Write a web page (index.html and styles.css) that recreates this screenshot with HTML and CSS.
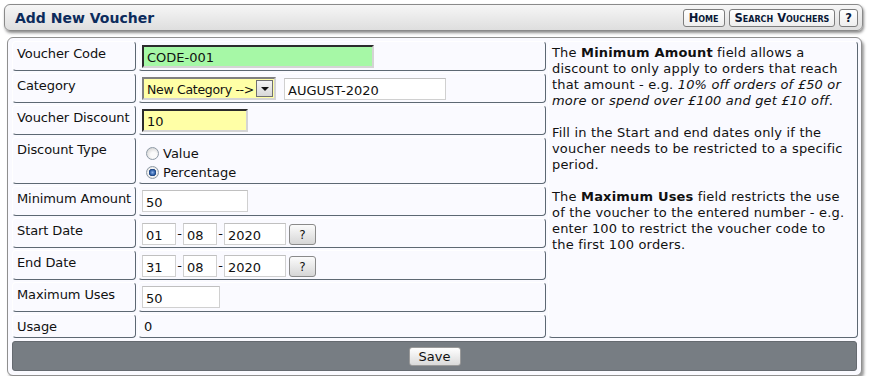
FILE: index.html
```html
<!DOCTYPE html>
<html lang="en">
<head>
  <meta charset="UTF-8">
  <meta name="viewport" content="width=device-width, initial-scale=1.0">
  <title>Add New Voucher</title>
  <link rel="stylesheet" href="styles.css">
</head>
<body>
  <div class="title-bar">
    <h1>Add New Voucher</h1>
    <div class="title-links">
      <a href="#" class="title-btn">Home</a>
      <a href="#" class="title-btn">Search Vouchers</a>
      <a href="#" class="title-btn">?</a>
    </div>
  </div>

  <div class="voucher-panel">
    <div class="form-grid">
      <div class="cell label">Voucher Code</div>
      <div class="cell field"><input type="text" class="inp inp-code" value="CODE-001"></div>

      <div class="cell help">
        <p>The <b>Minimum Amount</b> field allows a discount to only apply to orders that reach that amount - e.g. <i>10% off orders of £50 or more</i> or <i>spend over £100 and get £10 off</i>.</p>
        <p>Fill in the Start and end dates only if the voucher needs to be restricted to a specific period.</p>
        <p>The <b>Maximum Uses</b> field restricts the use of the voucher to the entered number - e.g. enter 100 to restrict the voucher code to the first 100 orders.</p>
      </div>

      <div class="cell label">Category</div>
      <div class="cell field">
        <div class="fake-select">
          <span class="fake-select-text">New Category --&gt;</span>
          <span class="fake-select-arrow"></span>
        </div>
        <input type="text" class="inp inp-plain inp-cat" value="AUGUST-2020">
      </div>

      <div class="cell label">Voucher Discount</div>
      <div class="cell field"><input type="text" class="inp inp-yellow inp-short" value="10"></div>

      <div class="cell label">Discount Type</div>
      <div class="cell field radios">
        <label class="radio"><input type="radio" name="dtype"> Value</label>
        <label class="radio"><input type="radio" name="dtype" checked> Percentage</label>
      </div>

      <div class="cell label">Minimum Amount</div>
      <div class="cell field"><input type="text" class="inp inp-plain inp-short" value="50"></div>

      <div class="cell label">Start Date</div>
      <div class="cell field date-row">
        <input type="text" class="inp inp-plain inp-day" value="01">
        <span class="dash">-</span>
        <input type="text" class="inp inp-plain inp-day" value="08">
        <span class="dash">-</span>
        <input type="text" class="inp inp-plain inp-year" value="2020">
        <button class="cal-btn">?</button>
      </div>

      <div class="cell label">End Date</div>
      <div class="cell field date-row">
        <input type="text" class="inp inp-plain inp-day" value="31">
        <span class="dash">-</span>
        <input type="text" class="inp inp-plain inp-day" value="08">
        <span class="dash">-</span>
        <input type="text" class="inp inp-plain inp-year" value="2020">
        <button class="cal-btn">?</button>
      </div>

      <div class="cell label">Maximum Uses</div>
      <div class="cell field"><input type="text" class="inp inp-plain inp-uses" value="50"></div>

      <div class="cell label">Usage</div>
      <div class="cell field usage">0</div>
    </div>

    <div class="save-bar">
      <button class="save-btn">Save</button>
    </div>
  </div>
</body>
</html>
```

FILE: styles.css
```css
* { box-sizing: border-box; }
body {
  margin: 0;
  padding: 4px 6px 0 4px;
  background: #fff;
  font-family: "DejaVu Sans", Verdana, sans-serif;
  font-size: 13px;
  color: #111;
}

/* title bar */
.title-bar {
  display: flex;
  align-items: center;
  justify-content: space-between;
  height: 27px;
  padding: 0 4px 0 10px;
  background: linear-gradient(#f6f6f6, #dedede);
  border: 1px solid #8a8a8a;
  border-radius: 6px;
  box-shadow: 1px 2px 3px rgba(0,0,0,0.45);
}
.title-bar h1 {
  margin: 0;
  font-size: 14px;
  font-weight: bold;
  color: #0c2b5c;
}
.title-links {
  display: flex;
  gap: 4px;
}
.title-btn {
  display: block;
  height: 18px;
  padding: 0 5px;
  line-height: 16px;
  font-size: 11.5px;
  font-weight: bold;
  font-variant: small-caps;
  color: #0a1836;
  text-decoration: none;
  background: linear-gradient(#fff, #eee);
  border: 1px solid #7d7d7d;
  border-radius: 3px;
}

/* main panel */
.voucher-panel {
  margin: 6px 0 0 3px;
  width: 855px;
  padding: 3px 4px 4px;
  background: #fafaff;
  border: 1px solid #8f8f8f;
  border-radius: 6px;
  box-shadow: 2px 3px 3px rgba(0,0,0,0.4);
}
.form-grid {
  display: grid;
  grid-template-columns: 124px 408px 310px;
  grid-template-rows: 30px 30px 30px 47px 30px 30px 30px 30px 24px;
  gap: 2px;
}
.cell {
  border: 1px solid;
  border-color: #fff #5d6873 #5d6873 #fff;
  border-radius: 4px;
}
.label {
  padding: 4px 0 0 4px;
  line-height: 16px;
  white-space: nowrap;
  letter-spacing: -0.1px;
}
.field {
  display: flex;
  align-items: flex-start;
  padding: 3px 3px 0 3px;
}
.help {
  grid-column: 3;
  grid-row: 1 / 10;
  padding: 3px 9px 0 3px;
  line-height: 16px;
  letter-spacing: 0.18px;
}
.help p { margin: 0 0 16px; }

/* inputs */
.inp {
  height: 23px;
  padding: 1px 3px 0;
  font-family: inherit;
  font-size: 13px;
  color: #111;
  background: #fff;
  border: 2px inset #9a9a9a;
  outline: none;
}
.inp-code {
  width: 232px;
  background: #a6f8a6;
  border-color: #808080 #d4d4d4 #d4d4d4 #808080;
}
.inp-yellow {
  background: #ffffa6;
  border-color: #808080 #d4d4d4 #d4d4d4 #808080;
}
.inp-plain {
  height: 22px;
  border: 1px solid #d0d0d0;
  border-top-color: #c0c0c0;
  padding: 2px 3px 0;
}
.inp-short { width: 106px; }
.inp-cat { width: 162px; margin: 1px 0 0 8px; }
.inp-uses { width: 78px; }
.inp-day { width: 34px; }
.inp-year { width: 62px; }

.fake-select {
  display: flex;
  align-items: center;
  width: 134px;
  height: 23px;
  padding: 0 1px 0 3px;
  background: #ffffa6;
  border: 2px solid;
  border-color: #808080 #d4d4d4 #d4d4d4 #808080;
  white-space: nowrap;
}
.fake-select-text {
  flex: 1;
  padding-top: 1px;
  font-size: 12.5px;
  letter-spacing: -0.3px;
}
.fake-select-arrow {
  position: relative;
  flex: none;
  width: 17px;
  height: 17px;
  background: linear-gradient(#f4f4f4, #d8d8d8);
  border: 1px solid #707070;
}
.fake-select-arrow::after {
  content: "";
  position: absolute;
  left: 4px;
  top: 6px;
  border: 4px solid transparent;
  border-top: 4px solid #111;
  border-bottom: 0;
}

.date-row { padding-top: 4px; }
.dash { width: 7px; text-align: center; line-height: 22px; }
.cal-btn {
  width: 27px;
  height: 21px;
  margin: 1px 0 0 3px;
  padding: 0;
  font-family: inherit;
  font-size: 12px;
  color: #111;
  background: linear-gradient(#fbfbfb, #d6d6d6);
  border: 1px solid #8a8a8a;
  border-radius: 3px;
}

/* radios */
.radios {
  flex-direction: column;
  padding: 6px 0 0 7px;
}
.radio {
  display: flex;
  align-items: center;
  height: 19px;
  gap: 4px;
}
.radio input {
  appearance: none;
  margin: 0;
  width: 13px;
  height: 13px;
  border: 1px solid #8e9aa6;
  border-radius: 50%;
  background: radial-gradient(circle at 60% 65%, #fafafa 30%, #c8c8c8 100%);
}
.radio input:checked {
  background: radial-gradient(circle at 50% 50%, #8fb3e8 0, #2e5fa8 2.5px, #1b3f7a 3.5px, #f4f4f4 4px, #d0d0d0 100%);
}

.usage { padding: 4px 0 0 5px; line-height: 16px; }

/* save bar */
.save-bar {
  display: flex;
  justify-content: center;
  align-items: center;
  height: 30px;
  margin-top: 3px;
  background: #777d83;
  border: 1px solid #656a70;
  border-radius: 3px;
}
.save-btn {
  height: 19px;
  width: 52px;
  padding: 0;
  font-family: inherit;
  font-size: 13px;
  color: #111;
  background: linear-gradient(#ffffff, #dadada);
  border: 1px solid #9a9a9a;
  border-radius: 3px;
}
```
